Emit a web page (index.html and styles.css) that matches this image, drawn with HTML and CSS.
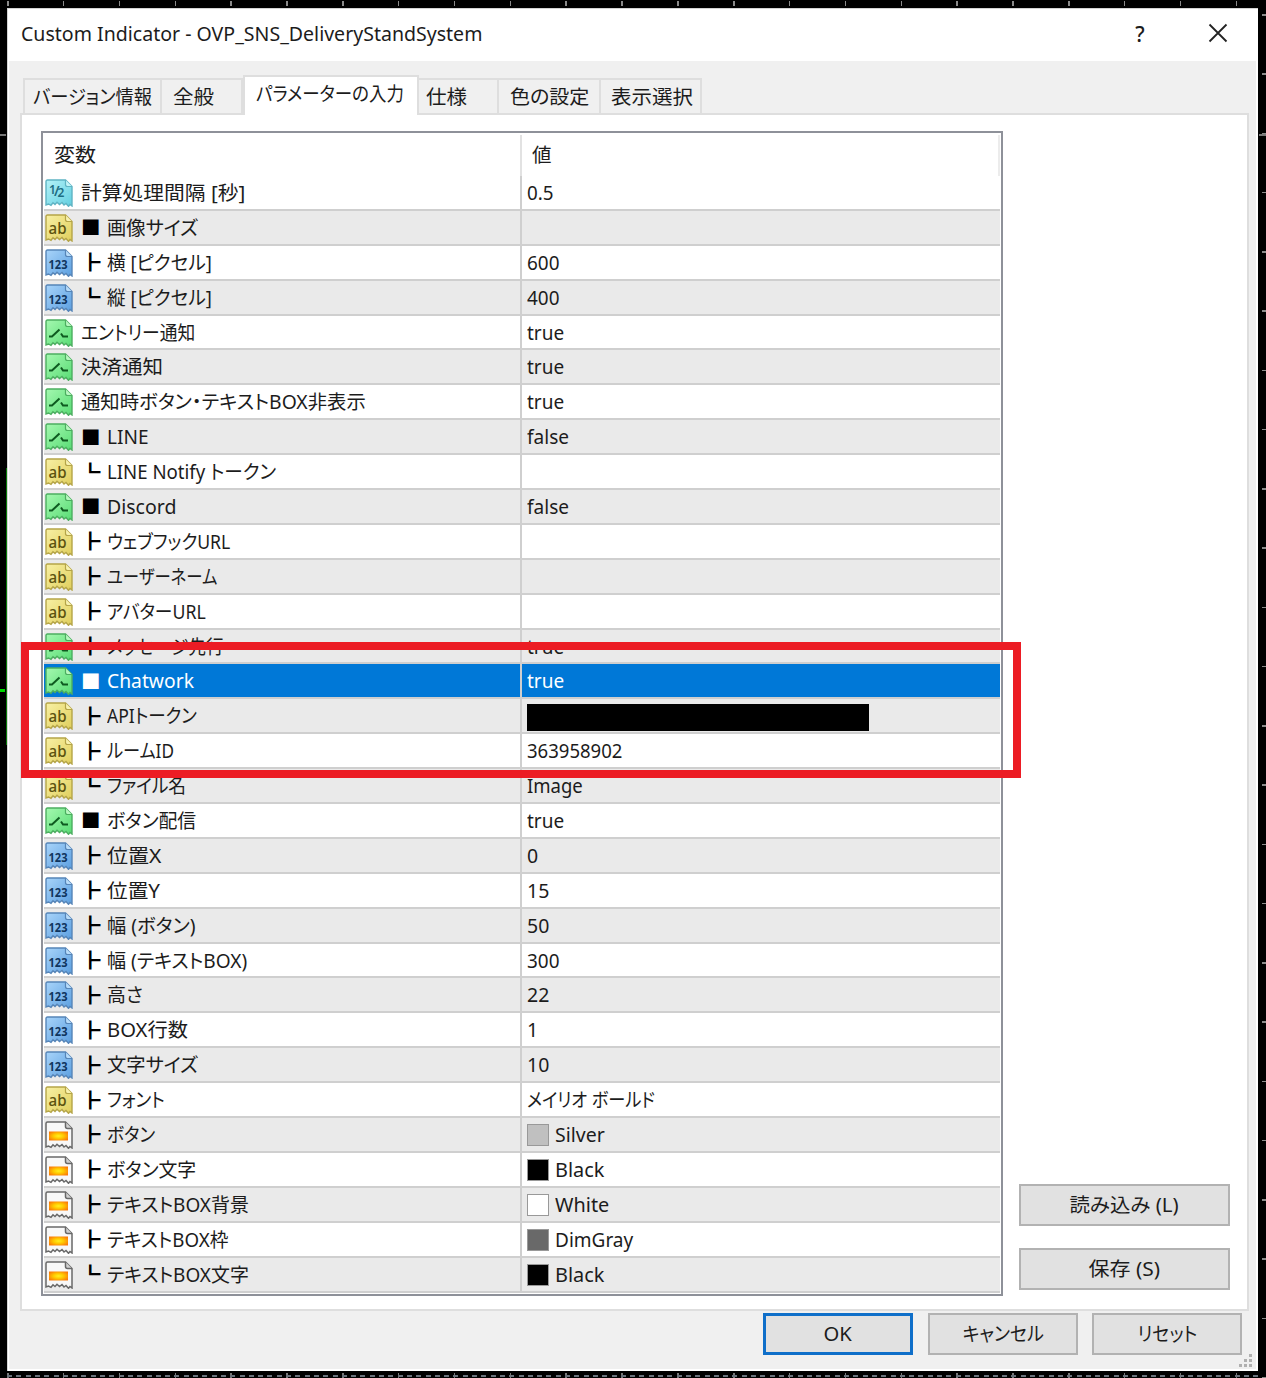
FILE: index.html
```html
<!DOCTYPE html>
<html lang="ja">
<head>
<meta charset="utf-8">
<title>Custom Indicator</title>
<link rel="stylesheet" href="styles.css">
</head>
<body>
<svg class="defs" width="0" height="0">
  <defs>
    <linearGradient id="g-cyan" x1="0" y1="0" x2="1" y2="1"><stop offset="0" stop-color="#b4f2f8"/><stop offset="1" stop-color="#62cfe0"/></linearGradient>
    <linearGradient id="g-yellow" x1="0" y1="0" x2="1" y2="1"><stop offset="0" stop-color="#f8f0a4"/><stop offset="1" stop-color="#e0cf5c"/></linearGradient>
    <linearGradient id="g-blue" x1="0" y1="0" x2="1" y2="1"><stop offset="0" stop-color="#a8d4fa"/><stop offset="1" stop-color="#5c9fe0"/></linearGradient>
    <linearGradient id="g-green" x1="0" y1="0" x2="1" y2="1"><stop offset="0" stop-color="#a4f8b0"/><stop offset="1" stop-color="#58dc74"/></linearGradient>
    <radialGradient id="g-orange" cx=".5" cy=".5" r=".6"><stop offset="0" stop-color="#fff020"/><stop offset=".45" stop-color="#ffc800"/><stop offset="1" stop-color="#fb7a08"/></radialGradient>
    <path id="sheet" d="M2.5 1H20.5L27 7.5V27L25 25.5L23.5 27.3L21 24.5L19 26L17 23.5L14.5 25.5L12 23.3L10 25.5L8 23.8L6 26.3L3.5 25L1 26V2.5Q1 1 2.5 1Z"/>
    <path id="fold" d="M20.5 1V5.5Q20.5 7.5 22.5 7.5H27"/>
    <symbol id="i-dbl" viewBox="0 0 28 28"><use href="#sheet" fill="url(#g-cyan)" stroke="#5fb4c4" stroke-width="1.4"/><use href="#fold" fill="#c4f4f8" stroke="#5fb4c4" stroke-width="1.2"/><g fill="#1d6d82" font-weight="600"><text x="4" y="14.5" font-size="12">1</text><text x="9" y="17" font-size="14">/</text><text x="12.5" y="18" font-size="12">2</text></g></symbol>
    <symbol id="i-str" viewBox="0 0 28 28"><use href="#sheet" fill="url(#g-yellow)" stroke="#b5a548" stroke-width="1.4"/><use href="#fold" fill="#f8f2b0" stroke="#b5a548" stroke-width="1.2"/><text x="3.5" y="19.5" font-size="16" font-weight="500" textLength="18" lengthAdjust="spacingAndGlyphs" fill="#5c5310">ab</text></symbol>
    <symbol id="i-int" viewBox="0 0 28 28"><use href="#sheet" fill="url(#g-blue)" stroke="#5685b8" stroke-width="1.4"/><use href="#fold" fill="#b8dcfa" stroke="#5685b8" stroke-width="1.2"/><text x="3.5" y="19.5" font-size="12" font-weight="bold" textLength="19" lengthAdjust="spacingAndGlyphs" fill="#10355e">123</text></symbol>
    <symbol id="i-bool" viewBox="0 0 28 28"><use href="#sheet" fill="url(#g-green)" stroke="#4cae60" stroke-width="1.4"/><use href="#fold" fill="#b8f8c0" stroke="#4cae60" stroke-width="1.2"/><path d="M4 17.5H7L14.5 10.5M16 14.5L18 17.5H23" fill="none" stroke="#0e5a20" stroke-width="2"/></symbol>
    <symbol id="i-clr" viewBox="0 0 28 28"><use href="#sheet" fill="#f8f8f8" stroke="#686868" stroke-width="1.5"/><use href="#fold" fill="#d0d0d0" stroke="#686868" stroke-width="1.5"/><rect x="4" y="10.5" width="19" height="9" fill="url(#g-orange)"/></symbol>
  </defs>
</svg>
<div class="desk">
  <div class="ticks top"></div><div class="ticks right"></div><div class="ticks bottom"></div><div class="dash"></div>
  <div class="axis left"></div><div class="axis edge"></div><div class="trace"></div><div class="mark"></div>
  <section class="window">
    <header class="titlebar">
      <span class="title"><span class="t" data-w="461">Custom Indicator - OVP_SNS_DeliveryStandSystem</span></span>
      <span class="help">?</span>
      <svg class="close" width="20" height="20" viewBox="0 0 20 20"><path d="M1.5 1.5L18.5 18.5M18.5 1.5L1.5 18.5" stroke="#222" stroke-width="1.8"/></svg>
    </header>
    <div class="body">
      <nav class="tabs">
        <div class="tab t1"><span class="t" data-w="119">バージョン情報</span></div>
        <div class="tab t2"><span class="t" data-w="41">全般</span></div>
        <div class="tab active"><span class="t" data-w="148">パラメーターの入力</span></div>
        <div class="tab t4"><span class="t" data-w="41">仕様</span></div>
        <div class="tab t5"><span class="t" data-w="79">色の設定</span></div>
        <div class="tab t6"><span class="t" data-w="82">表示選択</span></div>
      </nav>
      <div class="pane">
        <div class="list">
          <div class="head"><div><span class="t" data-w="42">変数</span></div><div><span class="t" data-w="20">値</span></div></div>
          <div class="rows">
<div class="row"><div class="name"><svg class="icon"><use href="#i-dbl"/></svg><span class="t" data-w="164">計算処理間隔 [秒]</span></div><div class="val"><span class="t" data-w="27">0.5</span></div></div>
<div class="row"><div class="name"><svg class="icon"><use href="#i-str"/></svg><i class="sq">■</i><span class="t" data-w="91">画像サイズ</span></div><div class="val"></div></div>
<div class="row"><div class="name"><svg class="icon"><use href="#i-int"/></svg><i class="br">┣</i><span class="t" data-w="105">横 [ピクセル]</span></div><div class="val"><span class="t" data-w="32">600</span></div></div>
<div class="row"><div class="name"><svg class="icon"><use href="#i-int"/></svg><i class="br">┗</i><span class="t" data-w="105">縦 [ピクセル]</span></div><div class="val"><span class="t" data-w="32">400</span></div></div>
<div class="row"><div class="name"><svg class="icon"><use href="#i-bool"/></svg><span class="t" data-w="114">エントリー通知</span></div><div class="val"><span class="t" data-w="37">true</span></div></div>
<div class="row"><div class="name"><svg class="icon"><use href="#i-bool"/></svg><span class="t" data-w="82">決済通知</span></div><div class="val"><span class="t" data-w="37">true</span></div></div>
<div class="row"><div class="name"><svg class="icon"><use href="#i-bool"/></svg><span class="t" data-w="285">通知時ボタン・テキストBOX非表示</span></div><div class="val"><span class="t" data-w="37">true</span></div></div>
<div class="row"><div class="name"><svg class="icon"><use href="#i-bool"/></svg><i class="sq">■</i><span class="t" data-w="42">LINE</span></div><div class="val"><span class="t" data-w="42">false</span></div></div>
<div class="row"><div class="name"><svg class="icon"><use href="#i-str"/></svg><i class="br">┗</i><span class="t" data-w="169">LINE Notify トークン</span></div><div class="val"></div></div>
<div class="row"><div class="name"><svg class="icon"><use href="#i-bool"/></svg><i class="sq">■</i><span class="t" data-w="69">Discord</span></div><div class="val"><span class="t" data-w="42">false</span></div></div>
<div class="row"><div class="name"><svg class="icon"><use href="#i-str"/></svg><i class="br">┣</i><span class="t" data-w="123">ウェブフックURL</span></div><div class="val"></div></div>
<div class="row"><div class="name"><svg class="icon"><use href="#i-str"/></svg><i class="br">┣</i><span class="t" data-w="110">ユーザーネーム</span></div><div class="val"></div></div>
<div class="row"><div class="name"><svg class="icon"><use href="#i-str"/></svg><i class="br">┣</i><span class="t" data-w="99">アバターURL</span></div><div class="val"></div></div>
<div class="row"><div class="name"><svg class="icon"><use href="#i-bool"/></svg><i class="br">┣</i><span class="t" data-w="117">メッセージ先行</span></div><div class="val"><span class="t" data-w="37">true</span></div></div>
<div class="row selected"><div class="name"><svg class="icon"><use href="#i-bool"/></svg><i class="sq">■</i><span class="t" data-w="87">Chatwork</span></div><div class="val"><span class="t" data-w="37">true</span></div></div>
<div class="row"><div class="name"><svg class="icon"><use href="#i-str"/></svg><i class="br">┣</i><span class="t" data-w="90">APIトークン</span></div><div class="val"><div class="redacted"></div></div></div>
<div class="row"><div class="name"><svg class="icon"><use href="#i-str"/></svg><i class="br">┣</i><span class="t" data-w="67">ルームID</span></div><div class="val"><span class="t" data-w="95">363958902</span></div></div>
<div class="row"><div class="name"><svg class="icon"><use href="#i-str"/></svg><i class="br">┗</i><span class="t" data-w="79">ファイル名</span></div><div class="val"><span class="t" data-w="56">Image</span></div></div>
<div class="row"><div class="name"><svg class="icon"><use href="#i-bool"/></svg><i class="sq">■</i><span class="t" data-w="89">ボタン配信</span></div><div class="val"><span class="t" data-w="37">true</span></div></div>
<div class="row"><div class="name"><svg class="icon"><use href="#i-int"/></svg><i class="br">┣</i><span class="t" data-w="54">位置X</span></div><div class="val"><span class="t" data-w="11">0</span></div></div>
<div class="row"><div class="name"><svg class="icon"><use href="#i-int"/></svg><i class="br">┣</i><span class="t" data-w="53">位置Y</span></div><div class="val"><span class="t" data-w="22">15</span></div></div>
<div class="row"><div class="name"><svg class="icon"><use href="#i-int"/></svg><i class="br">┣</i><span class="t" data-w="88">幅 (ボタン)</span></div><div class="val"><span class="t" data-w="22">50</span></div></div>
<div class="row"><div class="name"><svg class="icon"><use href="#i-int"/></svg><i class="br">┣</i><span class="t" data-w="140">幅 (テキストBOX)</span></div><div class="val"><span class="t" data-w="32">300</span></div></div>
<div class="row"><div class="name"><svg class="icon"><use href="#i-int"/></svg><i class="br">┣</i><span class="t" data-w="36">高さ</span></div><div class="val"><span class="t" data-w="22">22</span></div></div>
<div class="row"><div class="name"><svg class="icon"><use href="#i-int"/></svg><i class="br">┣</i><span class="t" data-w="81">BOX行数</span></div><div class="val"><span class="t" data-w="11">1</span></div></div>
<div class="row"><div class="name"><svg class="icon"><use href="#i-int"/></svg><i class="br">┣</i><span class="t" data-w="91">文字サイズ</span></div><div class="val"><span class="t" data-w="22">10</span></div></div>
<div class="row"><div class="name"><svg class="icon"><use href="#i-str"/></svg><i class="br">┣</i><span class="t" data-w="58">フォント</span></div><div class="val"><span class="t" data-w="128">メイリオ ボールド</span></div></div>
<div class="row"><div class="name"><svg class="icon"><use href="#i-clr"/></svg><i class="br">┣</i><span class="t" data-w="48">ボタン</span></div><div class="val"><b class="swatch silver"></b><span class="t" data-w="50">Silver</span></div></div>
<div class="row"><div class="name"><svg class="icon"><use href="#i-clr"/></svg><i class="br">┣</i><span class="t" data-w="89">ボタン文字</span></div><div class="val"><b class="swatch black"></b><span class="t" data-w="49">Black</span></div></div>
<div class="row"><div class="name"><svg class="icon"><use href="#i-clr"/></svg><i class="br">┣</i><span class="t" data-w="142">テキストBOX背景</span></div><div class="val"><b class="swatch white"></b><span class="t" data-w="54">White</span></div></div>
<div class="row"><div class="name"><svg class="icon"><use href="#i-clr"/></svg><i class="br">┣</i><span class="t" data-w="121">テキストBOX枠</span></div><div class="val"><b class="swatch dim"></b><span class="t" data-w="78">DimGray</span></div></div>
<div class="row"><div class="name"><svg class="icon"><use href="#i-clr"/></svg><i class="br">┗</i><span class="t" data-w="142">テキストBOX文字</span></div><div class="val"><b class="swatch black"></b><span class="t" data-w="49">Black</span></div></div>
          </div>
        </div>
        <div class="side">
          <button class="btn"><span class="t" data-w="109">読み込み (L)</span></button>
          <button class="btn"><span class="t" data-w="71">保存 (S)</span></button>
        </div>
      </div>
      <footer class="actions">
        <button class="btn primary"><span class="t" data-w="28">OK</span></button>
        <button class="btn"><span class="t" data-w="81">キャンセル</span></button>
        <button class="btn"><span class="t" data-w="60">リセット</span></button>
      </footer>
    </div>
    <svg class="grip" width="14" height="14" viewBox="0 0 14 14" fill="#b0b0b0"><path d="M10 0h3v3h-3zM5 5h3v3H5zM10 5h3v3h-3zM0 10h3v3H0zM5 10h3v3H5zM10 10h3v3h-3z"/></svg>
  </section>
  <div class="highlight"></div>
</div>
<script src="fit.js"></script>
</body>
</html>
```

FILE: styles.css
```css
* { box-sizing: border-box; }
body { margin: 0; background: #000; }
.defs { position: absolute; }
.desk {
  position: relative; width: 1266px; height: 1378px; overflow: hidden;
  padding: 8px 8px 7px 7px; background: #000; color: #1c1c1c;
  font: 19.5px/28px "Noto Sans", "Noto Sans CJK JP", sans-serif;
  font-feature-settings: "palt";
}
/* chart scales behind the dialog */
.ticks { position: absolute; }
.ticks.top { left: 7px; right: 0; top: 1px; height: 5px; background: repeating-linear-gradient(90deg, #8a8a8a 0 1.5px, transparent 1.5px 55.85px); }
.ticks.bottom { left: 7px; right: 0; bottom: 0; height: 5px; background: repeating-linear-gradient(90deg, #777 0 1.5px, transparent 1.5px 55.85px); }
.ticks.right { right: 0; top: 14px; bottom: 0; width: 4px; background: repeating-linear-gradient(180deg, #8a8a8a 0 1.5px, transparent 1.5px 59.25px); }
.dash { position: absolute; left: 7px; right: 8px; bottom: 1px; height: 2px; background: repeating-linear-gradient(90deg, #68717a 0 5px, transparent 5px 9.3px); }
.axis { position: absolute; top: 134px; height: 2px; background: #777; }
.axis.left { left: 0; width: 6px; }
.axis.edge { right: 0; width: 7px; }
.trace { position: absolute; left: 6px; top: 468px; width: 1px; height: 277px; background: #087a08; }
.mark { position: absolute; left: 0; top: 689px; width: 5px; height: 3px; background: #00d800; }

.window { position: relative; width: 1251px; height: 1363px; background: #fff; border: 1px solid #d4d4d4; border-width: 1px 0 0 1px; }
.titlebar { display: flex; align-items: center; height: 52px; padding: 0 30px 2px 13px; }
.title { flex: 1; }
.help { width: 16px; margin-right: 60px; text-align: center; font-size: 21px; font-weight: 500; }
.close { margin-top: -3px; }
.body { height: 1308px; margin: 0 2px 0 1px; padding: 14px 7px 0 11px; background: #f0f0f0; }
.t { display: inline-block; white-space: nowrap; transform-origin: 0 50%; }

.tabs { display: flex; align-items: flex-end; height: 38px; padding-left: 3px; }
.tab { display: flex; align-items: center; height: 35px; padding-left: 10px; border: 2px solid #dedede; border-left-width: 0; border-bottom: 0; }
.t1 { width: 139px; padding-left: 8px; border-left-width: 2px; }
.t2 { width: 81px; padding-left: 11px; }
.active { width: 176px; height: 40px; margin-bottom: -2px; padding: 0 0 4px 11px; border-left-width: 2px; background: #fff; z-index: 1; }
.t4 { width: 80px; padding-left: 7px; }
.t5 { width: 102px; padding-left: 11px; }
.t6 { width: 101px; }

.pane { display: flex; justify-content: space-between; height: 1198px; padding: 16px 17px 14px 19px; border: 2px solid #dedede; background: #fff; }
.list { width: 962px; height: 1165px; padding: 2px 2px 0 1px; border: 2px solid #8e9199; background: #fff; }
.head { display: grid; grid-template-columns: 476px 480px; height: 41px; }
.head div { padding: 6px 0 0 10px; }
.head div + div { border-left: 2px solid #e2e2e2; border-right: 2px solid #ececec; }
.rows { display: grid; grid-auto-rows: 34.9px; }
.row { display: grid; grid-template-columns: 476px 480px; width: 956px; border-bottom: 2px solid #cfcfcf; }
.row:nth-child(even) { background: #eaeaea; }
.name, .val { display: flex; align-items: center; min-width: 0; }
.name .t, .val .t { position: relative; top: .5px; }
.val { padding-left: 5px; border-left: 2px solid #cfcfcf; }
.icon { flex: none; width: 28px; height: 28px; margin: 1px 8px 0 1px; font-family: "Noto Sans", sans-serif; }
.sq, .br { flex: none; width: 26px; font-style: normal; color: #000; font-family: "Noto Sans CJK JP", sans-serif; font-feature-settings: normal; }
.sq { font-size: 19.5px; }
.br { font-size: 20.5px; transform: translate(-1px, -1px) scaleY(.9); }
.row.selected { background: #0078d7; color: #fff; }
.selected .sq { color: #fff; }
.redacted { width: 342px; height: 27px; margin-top: 4px; background: #000; }
.swatch { flex: none; width: 22px; height: 22px; margin: 1px 6px 0 0; border: 1px solid #999; }
.silver { background: #c0c0c0; }
.black { background: #000; }
.white { background: #fff; }
.dim { background: #696969; }

.side { display: flex; flex-direction: column; justify-content: flex-end; gap: 22px; padding-bottom: 5px; }
.btn { display: flex; align-items: center; justify-content: center; width: 211px; height: 42px; padding: 0; border: 2px solid #b2b2b2; background: #e1e1e1; color: inherit; font: inherit; font-feature-settings: inherit; }
.btn .t { transform-origin: 50% 50%; }
.actions { display: flex; justify-content: flex-end; gap: 14px; padding: 2px 7px 0 0; }
.actions .btn { width: 150px; }
.actions .primary { margin-right: 1px; border: 3px solid #0f6fc9; }
.grip { position: absolute; right: 5px; bottom: 3px; }
.highlight { position: absolute; left: 21px; top: 642px; width: 1000px; height: 136px; border: 8px solid #ec1c24; }
```

FILE: fit.js
```js
document.querySelectorAll('.t[data-w]').forEach(function (el) {
  el.style.transform = 'scaleX(' + (el.dataset.w / el.offsetWidth) + ')';
});
```
